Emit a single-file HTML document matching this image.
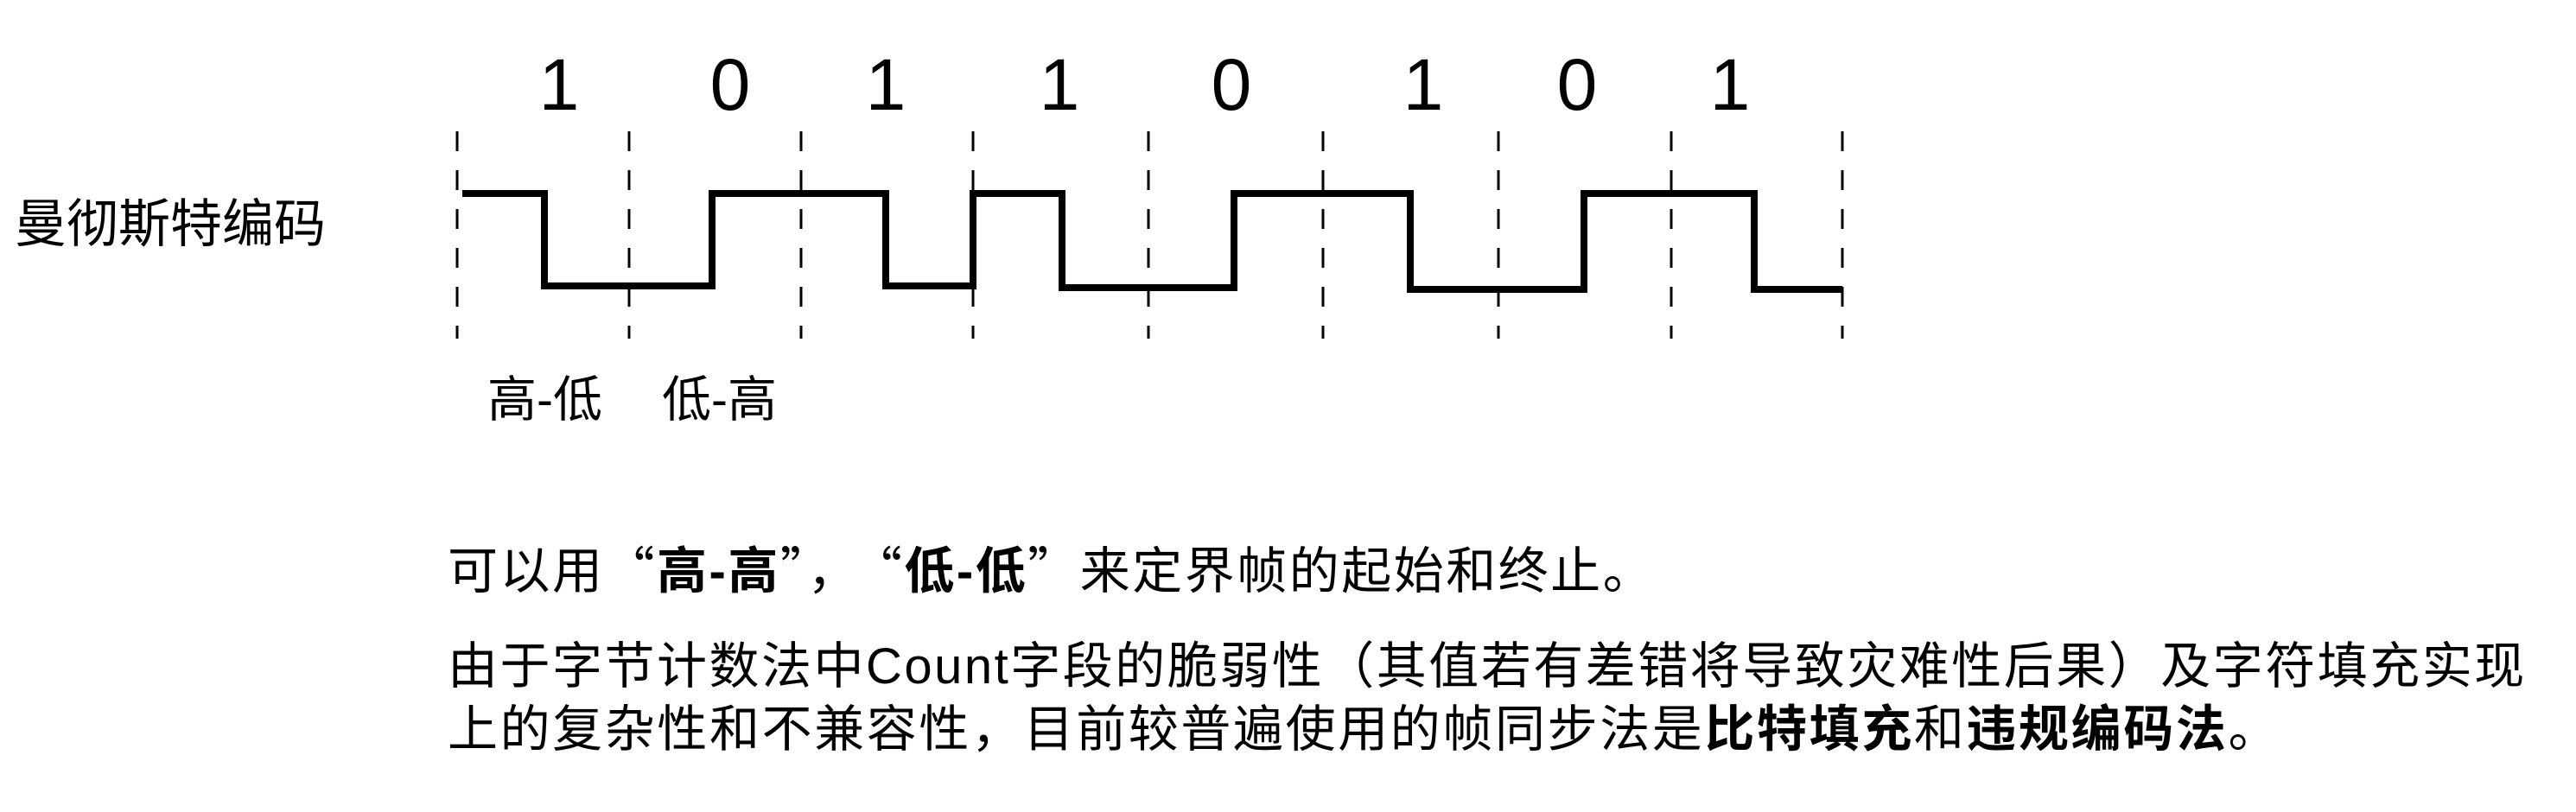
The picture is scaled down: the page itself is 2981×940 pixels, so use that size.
<!DOCTYPE html>
<html><head><meta charset="utf-8"><style>
html,body{margin:0;padding:0;background:#fff;width:2981px;height:940px;overflow:hidden}
.t{position:absolute;font-family:"Liberation Sans","Noto Sans CJK SC",sans-serif;color:#000;white-space:nowrap;line-height:1}
b{font-weight:bold}
.q{font-family:"Noto Sans CJK SC",sans-serif}
</style></head><body>
<svg width="2981" height="940" style="position:absolute;left:0;top:0">
<g stroke="#000" stroke-width="3" stroke-dasharray="23 22">
<line x1="529" y1="152" x2="529" y2="392"/><line x1="728" y1="152" x2="728" y2="392"/>
<line x1="927" y1="152" x2="927" y2="392"/><line x1="1126" y1="152" x2="1126" y2="392"/>
<line x1="1329" y1="152" x2="1329" y2="392"/><line x1="1531" y1="152" x2="1531" y2="392"/>
<line x1="1734" y1="152" x2="1734" y2="392"/><line x1="1934" y1="152" x2="1934" y2="392"/>
<line x1="2132" y1="152" x2="2132" y2="392"/>
</g>
<polyline fill="none" stroke="#000" stroke-width="8" points="535,224 630,224 630,331 824,331 824,224 1025,224 1025,331 1126,331 1126,224 1229,224 1229,333 1428,333 1428,224 1632,224 1632,335 1833,335 1833,224 2030,224 2030,335 2132,335"/>
<g font-family="Liberation Sans, sans-serif" font-size="84" text-anchor="middle">
<text x="647" y="127">1</text><text x="845" y="127">0</text><text x="1025" y="127">1</text>
<text x="1226" y="127">1</text><text x="1425" y="127">0</text><text x="1647" y="127">1</text>
<text x="1825" y="127">0</text><text x="2002" y="127">1</text>
</g>
</svg>
<div class="t" style="left:17px;top:230px;font-size:60px">曼彻斯特编码</div>
<div class="t" style="left:564px;top:435px;font-size:57px">高-低</div>
<div class="t" style="left:766px;top:435px;font-size:57px">低-高</div>
<div class="t" style="left:518px;top:627px;font-size:58px;letter-spacing:2.5px">可以用<span class="q">“</span><b>高-高</b><span class="q">”</span><span class="q" style="margin-right:20px">，</span><span class="q">“</span><b>低-低</b><span class="q">”</span>来定界帧的起始和终止。</div>
<div class="t" style="left:518px;top:743px;font-size:58px;letter-spacing:2.5px">由于字节计数法中Count字段的脆弱性（其值若有差错将导致灾难性后果）及字符填充实现</div>
<div class="t" style="left:518px;top:816px;font-size:58px;letter-spacing:2.6px">上的复杂性和不兼容性，目前较普遍使用的帧同步法是<b>比特填充</b>和<b>违规编码法</b>。</div>
</body></html>
